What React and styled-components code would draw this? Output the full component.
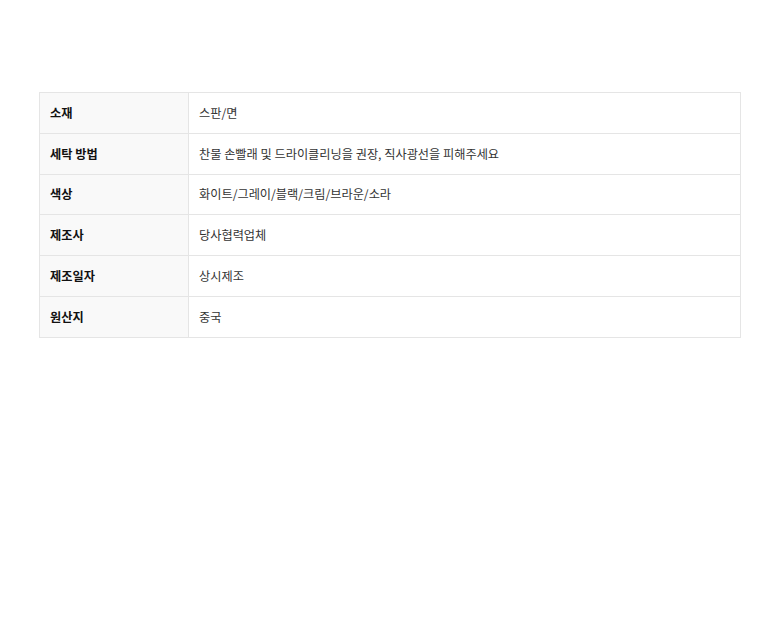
import React from 'react'
import styled, { createGlobalStyle } from 'styled-components'

const GlobalStyle = createGlobalStyle`
  html, body {
    margin: 0;
    padding: 0;
    background: #fff;
  }
  body {
    font-family: "Noto Sans CJK KR", "Noto Sans", sans-serif;
    color: #222;
  }
`

const rows = [
  ['소재', '스판/면'],
  ['세탁 방법', '찬물 손빨래 및 드라이클리닝을 권장, 직사광선을 피해주세요'],
  ['색상', '화이트/그레이/블랙/크림/브라운/소라'],
  ['제조사', '당사협력업체'],
  ['제조일자', '상시제조'],
  ['원산지', '중국'],
]

const Page = styled.div`
  padding: 92px 39px 0 39px;
`

const Table = styled.table`
  width: 702px;
  border-collapse: collapse;
  table-layout: fixed;
  border: 1px solid #e5e5e5;
`

const Row = styled.tr`
  height: 40.8px;
  border-bottom: 1px solid #e5e5e5;
`

const Label = styled.th`
  box-sizing: border-box;
  width: 149px;
  padding: 0 10px;
  text-align: left;
  background: #f9f9f9;
  border-right: 1px solid #e5e5e5;
  font-size: 12.2px;
  font-weight: 700;
  color: #111;
`

const Value = styled.td`
  padding: 0 10px;
  font-size: 12.2px;
  font-weight: 400;
  color: #333;
`

export default function App() {
  return (
    <>
      <GlobalStyle />
      <Page>
        <Table>
          <tbody>
            {rows.map(([k, v]) => (
              <Row key={k}>
                <Label>{k}</Label>
                <Value>{v}</Value>
              </Row>
            ))}
          </tbody>
        </Table>
      </Page>
    </>
  )
}
